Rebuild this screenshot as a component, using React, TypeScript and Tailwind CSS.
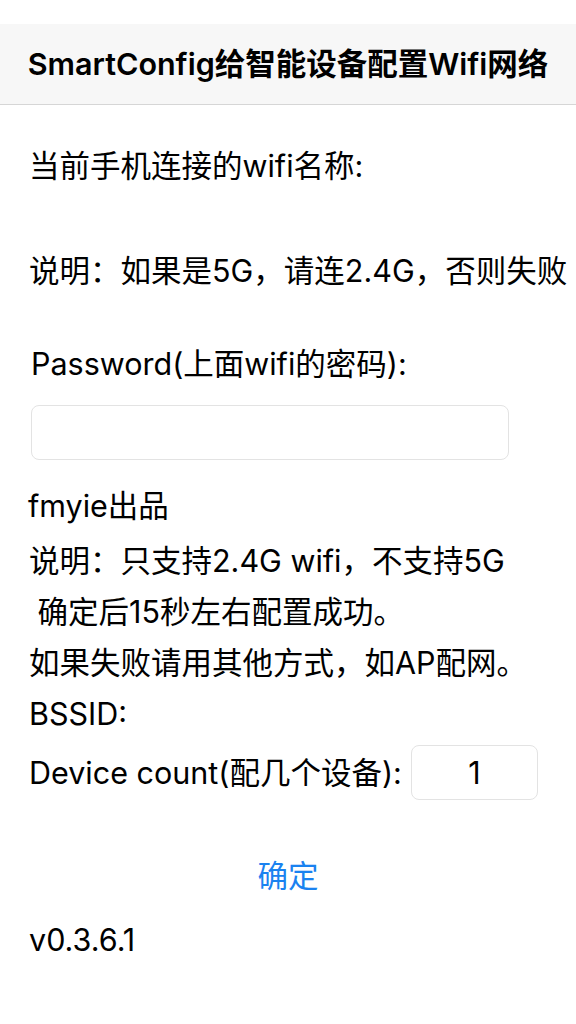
import React from "react";

export default function App() {
  return (
    <div
      className="min-h-screen bg-white text-black"
      style={{ fontFamily: 'Inter, "Noto Sans CJK SC", sans-serif' }}
    >
      <div className="h-[24px] bg-white" />
      <header className="flex h-[81px] items-center justify-center border-b border-[#d6d6d6] bg-[#f7f7f7]">
        <h1 className="whitespace-nowrap text-[30.5px] font-semibold leading-[40px]">
          SmartConfig给智能设备配置Wifi网络
        </h1>
      </header>

      <main className="px-[29px] text-[30.5px]">
        <div className="mt-[43px] leading-[36px]">当前手机连接的wifi名称:</div>
        <div className="mt-[69px] whitespace-nowrap leading-[36px]">说明：如果是5G，请连2.4G，否则失败</div>
        <div className="mt-[57px] pl-[2px] leading-[36px]">Password(上面wifi的密码):</div>
        <div className="mt-[23px] pl-[2px]">
          <input
            type="password"
            className="h-[55px] w-[478px] rounded-[8px] border border-[#e3e3e3] bg-white px-3 outline-none"
          />
        </div>
        <div className="mt-[20px] -ml-[1px] leading-[51px]">fmyie出品</div>
        <div className="mt-[4px] leading-[51px]">说明：只支持2.4G wifi，不支持5G</div>
        <div className="whitespace-pre leading-[51px]"> 确定后15秒左右配置成功。</div>
        <div className="leading-[51px]">如果失败请用其他方式，如AP配网。</div>
        <div className="leading-[51px]">BSSID:</div>
        <div className="mt-[6px] flex items-center">
          <span className="leading-[36px]">Device count(配几个设备):</span>
          <div className="ml-auto mr-[9px] flex h-[55px] w-[127px] items-center justify-center rounded-[8px] border border-[#e3e3e3] bg-white">
            1
          </div>
        </div>
        <div className="mt-[50px] text-center leading-[51px] text-[#1a82f0]">确定</div>
        <div className="mt-[13px] leading-[51px]">v0.3.6.1</div>
      </main>
    </div>
  );
}
